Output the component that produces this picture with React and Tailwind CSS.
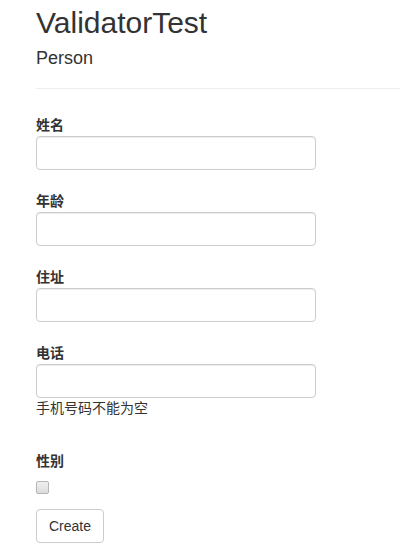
import React from "react";

function Field({ label, children, className = "" }) {
  return (
    <div className={`flex flex-col ${className}`}>
      <label className="block h-[21px] pt-[1px] leading-[20px] font-bold mb-[1px]">{label}</label>
      <input
        type="text"
        className="block w-[280px] h-[34px] px-[12px] border border-[#cccccc] rounded-[4px] bg-white shadow-[inset_0_1px_1px_rgba(0,0,0,0.075)] outline-none"
      />
      {children}
    </div>
  );
}

export default function App() {
  return (
    <div
      className="min-h-screen bg-white pl-[36px] pt-[6px] text-[#333333] text-[14px] leading-[20px]"
      style={{ fontFamily: '"Liberation Sans", "Noto Sans CJK SC", Arial, sans-serif' }}
    >
      <h2 className="text-[30px] leading-[33px] font-normal">ValidatorTest</h2>
      <h4 className="mt-[9px] text-[18px] leading-[20px] font-normal">Person</h4>
      <hr className="mt-[20px] border-0 border-t border-[#eeeeee]" />

      <div className="flex flex-col mt-[25px] gap-[20px]">
        <Field label="姓名" />
        <Field label="年龄" />
        <Field label="住址" />
        <Field label="电话">
          <span className="block h-[20px] leading-[20px]">手机号码不能为空</span>
        </Field>
      </div>

      <div className="flex flex-col items-start mt-[32px]">
        <label className="block h-[20px] pt-[1px] leading-[20px] font-bold">性别</label>
        <div className="mt-[11px] w-[13px] h-[13px] border border-[#b5b5b5] rounded-[2px] bg-gradient-to-b from-[#f0f0f0] to-[#dcdcdc]" />
        <button
          type="button"
          className="mt-[15px] h-[34px] px-[12px] border border-[#cccccc] rounded-[4px] bg-white text-[14px] leading-[20px] text-[#333333]"
        >
          Create
        </button>
      </div>
    </div>
  );
}
